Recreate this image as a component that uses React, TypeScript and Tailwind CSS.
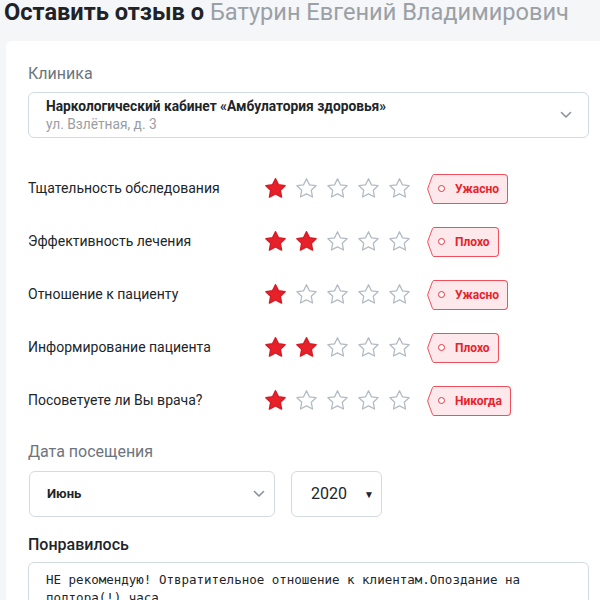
import React from "react";

const STAR_POINTS =
  "12,1.8 15.1,8.2 22,9.1 17,13.9 18.3,20.9 12,17.6 5.7,20.9 7,13.9 2,9.1 8.9,8.2";

function Star({ filled }: { filled: boolean }) {
  return (
    <svg width="23" height="23" viewBox="0 0 24 24" className="block">
      <polygon
        points={STAR_POINTS}
        fill={filled ? "#e7212a" : "#ffffff"}
        stroke={filled ? "#d81c25" : "#b3bac3"}
        strokeWidth={filled ? 1.6 : 1.3}
        strokeLinejoin="round"
      />
    </svg>
  );
}

function Tag({ text }: { text: string }) {
  return (
    <div className="flex h-[30px] items-stretch">
      <svg width="9" height="30" viewBox="0 0 9 30" className="block">
        <path
          d="M9 0.5 H7 Q6 0.5 5.5 1.5 L0.9 14 Q0.6 15 0.9 16 L5.5 28.5 Q6 29.5 7 29.5 H9"
          fill="#fde8eb"
          stroke="#f0505c"
          strokeWidth="1"
        />
      </svg>
      <div className="flex items-center border border-l-0 border-[#f0505c] bg-[#fde8eb] rounded-r-[4px] pl-[2px] pr-[8px]">
        <span className="block w-[7px] h-[7px] rounded-full border border-[#e8323d] bg-white" />
        <span className="ml-[10px] text-[12px] font-bold text-[#e8232b] leading-none">{text}</span>
      </div>
    </div>
  );
}

function Chevron() {
  return (
    <svg width="12" height="8" viewBox="0 0 12 8" className="block">
      <polyline points="1.5,1.5 6,6 10.5,1.5" fill="none" stroke="#8a939b" strokeWidth="1.6" strokeLinecap="round" strokeLinejoin="round" />
    </svg>
  );
}

const rows = [
  { label: "Тщательность обследования", n: 1, tag: "Ужасно" },
  { label: "Эффективность лечения", n: 2, tag: "Плохо" },
  { label: "Отношение к пациенту", n: 1, tag: "Ужасно" },
  { label: "Информирование пациента", n: 2, tag: "Плохо" },
  { label: "Посоветуете ли Вы врача?", n: 1, tag: "Никогда" },
];

export default function App() {
  return (
    <div className="w-[600px] h-[600px] overflow-hidden bg-[#f5f6f8] font-['Roboto',sans-serif]">
      <h1 className="pl-[4px] text-[23.6px] leading-[24px] whitespace-nowrap">
        <span className="font-bold text-[#1f2328]">Оставить отзыв о</span>{" "}
        <span className="text-[#9aa0a6]">Батурин Евгений Владимирович</span>
      </h1>
      <div className="ml-[6px] mt-[17px] w-[640px] bg-white rounded-[6px] pl-[22px] pt-[21px] pb-[40px]">
        <div className="w-[561px]">
          <div className="text-[16px] leading-[24px] text-[#6c757d]">Клиника</div>
          <div className="mt-[6px] h-[46px] border border-[#d3dae1] rounded-[6px] flex items-center pl-[17px] pr-[16px]">
            <div className="flex-1">
              <div className="text-[13.75px] leading-[18px] font-bold text-[#212529]">
                Наркологический кабинет «Амбулатория здоровья»
              </div>
              <div className="text-[13.75px] leading-[18px] text-[#9a9ea3]">ул. Взлётная, д. 3</div>
            </div>
            <Chevron />
          </div>

          <div className="mt-[24px]">
            {rows.map((r, i) => (
              <div key={i} className="h-[53px] flex items-center">
                <div className="w-[236px] text-[14px] text-[#212529]">{r.label}</div>
                <div className="flex gap-[8px]">
                  {[0, 1, 2, 3, 4].map((s) => (
                    <Star key={s} filled={s < r.n} />
                  ))}
                </div>
                <div className="ml-[16px]">
                  <Tag text={r.tag} />
                </div>
              </div>
            ))}
          </div>

          <div className="mt-[13px] text-[16px] leading-[24px] text-[#6c757d]">Дата посещения</div>
          <div className="mt-[7px] flex pl-[1px]">
            <div className="w-[246px] h-[46px] border border-[#d3dae1] rounded-[6px] flex items-center pl-[17px] pr-[9px]">
              <span className="flex-1 text-[13px] font-bold text-[#212529]">Июнь</span>
              <Chevron />
            </div>
            <div className="ml-[16px] w-[91px] h-[46px] border border-[#d3dae1] rounded-[6px] flex items-center pl-[19px] pr-[7px]">
              <span className="flex-1 text-[16px] text-[#212529]">2020</span>
              <span className="text-[10px] text-[#212529]">▼</span>
            </div>
          </div>

          <div className="mt-[16px] text-[16px] leading-[24px] font-medium text-[#212529]">Понравилось</div>
          <div className="mt-[5px] h-[120px] border border-[#d3dae1] rounded-[6px] pl-[17px] pr-[17px] pt-[8px] font-['DejaVu_Sans_Mono',monospace] text-[12.5px] leading-[18px] text-[#212529]">
            НЕ рекомендую! Отвратительное отношение к клиентам.Опоздание на полтора(!) часа.
          </div>
        </div>
      </div>
    </div>
  );
}
